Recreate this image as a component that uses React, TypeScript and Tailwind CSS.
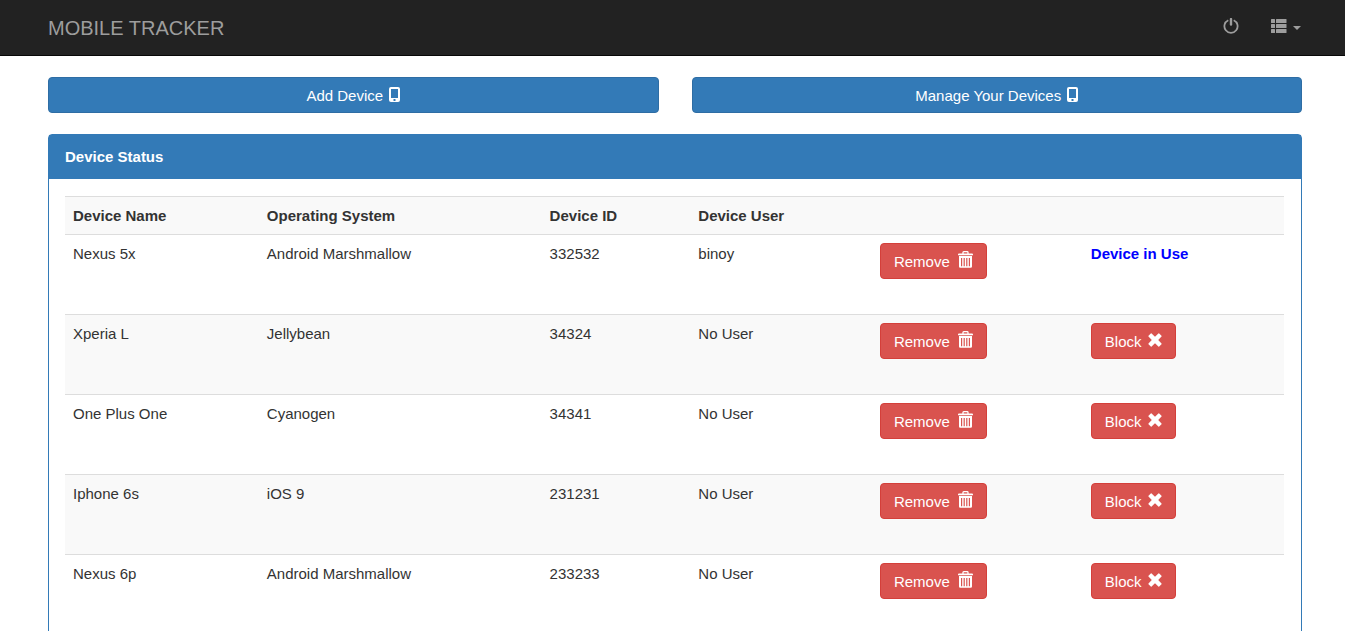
import React from "react";

type Device = { name: string; os: string; id: string; user: string; inUse?: boolean };

const devices: Device[] = [
  { name: "Nexus 5x", os: "Android Marshmallow", id: "332532", user: "binoy", inUse: true },
  { name: "Xperia L", os: "Jellybean", id: "34324", user: "No User" },
  { name: "One Plus One", os: "Cyanogen", id: "34341", user: "No User" },
  { name: "Iphone 6s", os: "iOS 9", id: "231231", user: "No User" },
  { name: "Nexus 6p", os: "Android Marshmallow", id: "233233", user: "No User" },
];

function PhoneIcon() {
  return (
    <svg width="11" height="16" viewBox="0 0 11 16" fill="currentColor" fillRule="evenodd" aria-hidden="true">
      <path d="M2 0H9Q11 0 11 2V13Q11 15 9 15H2Q0 15 0 13V2Q0 0 2 0ZM2 2V11H9V2ZM4.5 12V14H6.5V12Z" />
    </svg>
  );
}

function TrashIcon() {
  return (
    <svg width="15" height="17" viewBox="0 0 15 17" fill="none" stroke="currentColor" aria-hidden="true">
      <path d="M5 3V1.5Q5 .7 5.8 .7H9.2Q10 .7 10 1.5V3" strokeWidth="1.3" />
      <path d="M0 4.3V3.4Q0 2.4 1 2.4H14Q15 2.4 15 3.4V4.3Z" fill="currentColor" stroke="none" />
      <path
        d="M1 5H14V15.5Q14 16.8 12.7 16.8H2.3Q1 16.8 1 15.5ZM3 7V15.2H4.2V7ZM5.6 7V15.2H6.8V7ZM8.2 7V15.2H9.4V7ZM10.8 7V15.2H12V7Z"
        fill="currentColor"
        fillRule="evenodd"
        stroke="none"
      />
    </svg>
  );
}

function CrossIcon() {
  return (
    <svg width="14" height="14" viewBox="0 0 14 14" fill="currentColor" aria-hidden="true">
      <path d="M3.6 .5L7 3.7L10.4 .5Q10.8 .1 11.2 .5L13.5 2.8Q13.9 3.2 13.5 3.6L10.2 7L13.5 10.4Q13.9 10.8 13.5 11.2L11.2 13.5Q10.8 13.9 10.4 13.5L7 10.3L3.6 13.5Q3.2 13.9 2.8 13.5L.5 11.2Q.1 10.8 .5 10.4L3.8 7L.5 3.6Q.1 3.2 .5 2.8L2.8 .5Q3.2 .1 3.6 .5Z" />
    </svg>
  );
}

function PowerIcon() {
  return (
    <svg width="16" height="16" viewBox="0 0 16 16" fill="none" stroke="currentColor" aria-hidden="true">
      <path d="M5.3 2.2A6.6 6.6 0 1 0 10.7 2.2" strokeWidth="1.8" />
      <path d="M8 1V6.5" strokeWidth="2.4" strokeLinecap="round" />
    </svg>
  );
}

function ListIcon() {
  return (
    <svg width="16" height="14" viewBox="0 0 16 14" fill="currentColor" aria-hidden="true">
      {[0, 5, 10].map((y) => (
        <React.Fragment key={y}>
          <rect x="0" y={y} width="4" height="4" rx=".5" />
          <rect x="5" y={y} width="10.5" height="4" rx=".5" />
        </React.Fragment>
      ))}
    </svg>
  );
}

const primary =
  "flex h-9 items-center justify-center gap-1.5 rounded border border-[#2e6da4] bg-[#337ab7] text-white hover:bg-[#286090]";
const danger =
  "flex h-9 items-center rounded border border-[#d43f3a] bg-[#d9534f] px-[13px] text-white hover:bg-[#c9302c]";
const cell = "border-t border-[#ddd] p-2 text-left align-top";

export default function App() {
  return (
    <div className="bg-white font-['Liberation_Sans',Arial,sans-serif] text-[15px] leading-[21px] text-[#333]">
      <nav className="flex h-14 items-center justify-between border-b border-[#080808] bg-[#222] pr-11 pl-12 text-[#9d9d9d]">
        <a href="#" className="text-xl">MOBILE TRACKER</a>
        <div className="flex items-center gap-8 pb-[3px]">
          <button type="button" aria-label="Log out">
            <PowerIcon />
          </button>
          <button type="button" aria-label="Menu" className="flex items-center gap-1.5">
            <ListIcon />
            <svg width="8" height="4" viewBox="0 0 8 4" fill="currentColor" className="mt-1" aria-hidden="true">
              <path d="M0 0H8L4 4Z" />
            </svg>
          </button>
        </div>
      </nav>

      <main className="pt-[21px] pr-[43px] pb-5 pl-12">
        <div className="grid grid-cols-2 gap-[33px]">
          <button type="button" className={primary}>
            Add Device <PhoneIcon />
          </button>
          <button type="button" className={primary}>
            Manage Your Devices <PhoneIcon />
          </button>
        </div>

        <section className="mt-[21px] rounded border border-[#337ab7]">
          <h2 className="bg-[#337ab7] px-4 pt-[11px] pb-3 font-bold text-white">Device Status</h2>
          <div className="pt-[17px] pr-[17px] pb-4 pl-4">
            <table className="w-full table-fixed border-collapse">
              <colgroup>
                <col className="w-[15.9%]" />
                <col className="w-[23.2%]" />
                <col className="w-[12.2%]" />
                <col className="w-[14.9%]" />
                <col className="w-[17.3%]" />
                <col className="w-[16.5%]" />
              </colgroup>
              <thead>
                <tr className="bg-[#f9f9f9]">
                  <th className={cell}>Device Name</th>
                  <th className={cell}>Operating System</th>
                  <th className={cell}>Device ID</th>
                  <th className={cell}>Device User</th>
                  <td className={cell}></td>
                  <td className={cell}></td>
                </tr>
              </thead>
              <tbody>
                {devices.map((d) => (
                  <tr key={d.id} className="h-20 even:bg-[#f9f9f9]">
                    <td className={cell}>{d.name}</td>
                    <td className={cell}>{d.os}</td>
                    <td className={cell}>{d.id}</td>
                    <td className={cell}>{d.user}</td>
                    <td className={cell}>
                      <button type="button" className={danger}>
                        Remove
                        <span className="pb-1 pl-2">
                          <TrashIcon />
                        </span>
                      </button>
                    </td>
                    <td className={cell}>
                      {d.inUse ? (
                        <strong className="text-[#0000ff]">Device in Use</strong>
                      ) : (
                        <button type="button" className={danger}>
                          Block
                          <span className="pb-0.5 pl-1.5">
                            <CrossIcon />
                          </span>
                        </button>
                      )}
                    </td>
                  </tr>
                ))}
              </tbody>
            </table>
          </div>
        </section>
      </main>
    </div>
  );
}
